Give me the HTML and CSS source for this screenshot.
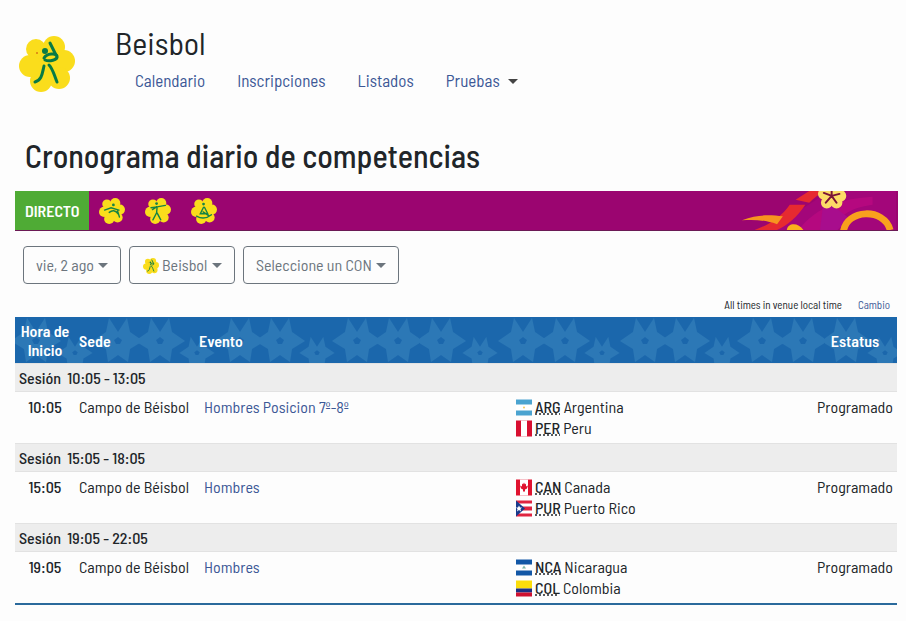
FILE: index.html
```
<!DOCTYPE html>
<html lang="es">
<head>
  <meta charset="UTF-8">
  <meta name="viewport" content="width=device-width, initial-scale=1.0">
  <title>Beisbol - Cronograma diario de competencias</title>
  <link rel="stylesheet" href="styles.css">
</head>
<body>
  <svg class="defs" width="0" height="0" aria-hidden="true">
    <defs>
      <symbol id="flower" viewBox="0 0 56 56">
        <g fill="#fadd1c">
          <circle cx="28" cy="28" r="19"/>
          <circle cx="17" cy="13" r="10"/>
          <circle cx="35" cy="11" r="11"/>
          <circle cx="45" cy="25" r="11"/>
          <circle cx="40" cy="42" r="11"/>
          <circle cx="22" cy="45" r="11"/>
          <circle cx="11" cy="30" r="11"/>
        </g>
      </symbol>
      <symbol id="baseball" viewBox="0 0 56 56">
        <use href="#flower"/>
        <g fill="none" stroke="#087a45" stroke-width="3" stroke-linecap="round" stroke-linejoin="round">
          <path d="M31 7l6 12"/>
          <path d="M25 22c3-5 12-5 13-2 1 4-8 6-12 4"/>
          <path d="M16 46c7-2 7-8 9-16M30 29c4 4 5 10 8 17"/>
        </g>
        <circle cx="26" cy="15" r="3" fill="#087a45"/>
        <circle cx="18" cy="17" r="1" fill="#d97a12"/>
      </symbol>
      <symbol id="batting" viewBox="0 0 56 56">
        <use href="#flower"/>
        <g fill="none" stroke="#168345" stroke-width="3" stroke-linecap="round">
          <path d="M12 26l14-5 17 5M22 31c6-5 13-6 20 4M40 28l4 13"/>
        </g>
        <circle cx="31" cy="15" r="3" fill="#168345"/>
      </symbol>
      <symbol id="archery" viewBox="0 0 56 56">
        <use href="#flower"/>
        <g fill="none" stroke="#168345" stroke-width="3" stroke-linecap="round">
          <path d="M13 21l13-2 18-3M26 20l-1 12-8 15M26 32l8 15M16 25l9-6"/>
        </g>
        <circle cx="25" cy="12" r="3" fill="#168345"/>
      </symbol>
      <symbol id="rowing" viewBox="0 0 56 56">
        <use href="#flower"/>
        <g fill="none" stroke="#168345" stroke-width="3" stroke-linecap="round">
          <path d="M27 20l-7 14h16l-7-14M12 39c10 6 22 5 32-3M26 30l12 8"/>
        </g>
        <circle cx="27" cy="13" r="3" fill="#168345"/>
      </symbol>
    </defs>
  </svg>

  <header class="header">
    <svg class="logo" role="img" aria-label="Beisbol"><use href="#baseball"/></svg>
    <div>
      <p class="sport">Beisbol</p>
      <nav class="nav">
        <a href="#">Calendario</a>
        <a href="#">Inscripciones</a>
        <a href="#">Listados</a>
        <a href="#" class="dropdown">Pruebas</a>
      </nav>
    </div>
  </header>

  <main>
    <h1>Cronograma diario de competencias</h1>

    <div class="live">
      <span class="live-label">DIRECTO</span>
      <a href="#" aria-label="Bate"><svg><use href="#batting"/></svg></a>
      <a href="#" aria-label="Tiro con arco"><svg><use href="#archery"/></svg></a>
      <a href="#" aria-label="Remo"><svg><use href="#rowing"/></svg></a>
      <svg class="live-art" viewBox="0 0 160 40" aria-hidden="true">
        <path d="M20 40C55 29 72 10 94 0h66v40z" fill="#a3067a"/>
        <path d="M60 40c20-25 45-32 76-34v8c-25 3-36 14-44 26z" fill="#b5087f"/>
        <path d="M86 8l26 20-12 12H82z" fill="#a80d8d"/>
        <path d="M15 40c14-5 27-13 36-26l16 0c-8 12-18 21-29 26z" fill="#e62a30"/>
        <path d="M57 9l14-9h18c-8 3-13 7-18 12z" fill="#e62a30"/>
        <path d="M2 30c18-7 31-5 42-4l-6 8c-12-4-22-5-36-4z" fill="#f7951f"/>
        <path d="M48 40c1-8 12-8 17 0z" fill="#fbb01c"/>
        <path d="M106 42c3-24 42-25 48-2" fill="none" stroke="#f9a11d" stroke-width="7"/>
        <g fill="#fcdc67">
          <circle cx="86" cy="3" r="6"/>
          <circle cx="94" cy="-1" r="7"/>
          <circle cx="103" cy="5" r="6"/>
          <circle cx="99" cy="12" r="6"/>
          <circle cx="89" cy="12" r="6"/>
          <circle cx="94" cy="6" r="7"/>
        </g>
        <path d="M94 5V-1M94 5l8-2M94 5l5 7M94 5l-6 7M94 5l-8-3" stroke="#7a1238" stroke-width="2" stroke-linecap="round"/>
      </svg>
    </div>

    <form class="filters">
      <label class="filter">
        <select aria-label="Fecha"><option>vie, 2 ago</option></select>
      </label>
      <label class="filter">
        <svg aria-hidden="true"><use href="#baseball"/></svg>
        <select aria-label="Deporte"><option>Beisbol</option></select>
      </label>
      <label class="filter">
        <select aria-label="CON"><option>Seleccione un CON</option></select>
      </label>
    </form>

    <div class="timezone">
      <span>All times in venue local time</span>
      <a href="#">Cambio</a>
    </div>

    <table class="schedule">
      <thead>
        <tr>
          <th class="time">Hora de Inicio</th>
          <th class="venue">Sede</th>
          <th class="event">Evento</th>
          <th class="teams"></th>
          <th class="status">Estatus</th>
        </tr>
      </thead>
      <tbody>
        <tr class="session"><th colspan="5">Sesión&nbsp; 10:05 - 13:05</th></tr>
        <tr>
          <td class="time">10:05</td>
          <td>Campo de Béisbol</td>
          <td class="event"><a href="#">Hombres Posicion 7º-8º</a></td>
          <td>
            <div class="team">
              <svg class="flag" viewBox="0 0 16 16"><path fill="#4aa3d0" d="M0 0h16v16H0z"/><path fill="#fff" d="M0 5h16v6H0z"/><circle cx="8" cy="8" r="1" fill="#f0c95a"/></svg>
              <abbr title="Argentina">ARG</abbr> Argentina
            </div>
            <div class="team">
              <svg class="flag" viewBox="0 0 16 16"><path fill="#d80f30" d="M0 0h16v16H0z"/><path fill="#fff" d="M5 0h6v16H5z"/></svg>
              <abbr title="Peru">PER</abbr> Peru
            </div>
          </td>
          <td class="status">Programado</td>
        </tr>

        <tr class="session"><th colspan="5">Sesión&nbsp; 15:05 - 18:05</th></tr>
        <tr>
          <td class="time">15:05</td>
          <td>Campo de Béisbol</td>
          <td class="event"><a href="#">Hombres</a></td>
          <td>
            <div class="team">
              <svg class="flag" viewBox="0 0 16 16"><path fill="#e0132f" d="M0 0h16v16H0z"/><path fill="#fff" d="M4 0h8v16H4z"/><path fill="#e0132f" d="M8 3l1 2 1-1v3l2-1-1 3-2 1v2H7v-2L5 9 4 6l2 1V4l1 1z"/></svg>
              <abbr title="Canada">CAN</abbr> Canada
            </div>
            <div class="team">
              <svg class="flag" viewBox="0 0 16 16"><path fill="#e02440" d="M0 0h16v16H0z"/><path fill="#fff" d="M0 3h16v3H0zM0 10h16v3H0z"/><path fill="#173a8c" d="M0 0l9 8-9 8z"/><path fill="#fff" d="M3 5l1 2h2L4.500 8.500 5 11 3 9.500 1 11l.5-2.500L0 7h2z"/></svg>
              <abbr title="Puerto Rico">PUR</abbr> Puerto Rico
            </div>
          </td>
          <td class="status">Programado</td>
        </tr>

        <tr class="session"><th colspan="5">Sesión&nbsp; 19:05 - 22:05</th></tr>
        <tr>
          <td class="time">19:05</td>
          <td>Campo de Béisbol</td>
          <td class="event"><a href="#">Hombres</a></td>
          <td>
            <div class="team">
              <svg class="flag" viewBox="0 0 16 16"><path fill="#1257a6" d="M0 0h16v16H0z"/><path fill="#fff" d="M0 5h16v6H0z"/><path fill="#7fb8a8" d="M8 6l2 3H6z"/></svg>
              <abbr title="Nicaragua">NCA</abbr> Nicaragua
            </div>
            <div class="team">
              <svg class="flag" viewBox="0 0 16 16"><path fill="#fbdd0b" d="M0 0h16v8H0z"/><path fill="#1c3084" d="M0 8h16v4H0z"/><path fill="#cf1030" d="M0 12h16v4H0z"/></svg>
              <abbr title="Colombia">COL</abbr> Colombia
            </div>
          </td>
          <td class="status">Programado</td>
        </tr>
      </tbody>
    </table>
  </main>
</body>
</html>
```
FILE: styles.css
```
* {
  box-sizing: border-box;
}
body {
  margin: 0;
  padding: 24px 8px 16px 15px;
  background-color: #fdfdfd;
  color: #212529;
  font-family: "Barlow Semi Condensed", "Roboto Condensed", Roboto, sans-serif;
  font-size: 16px;
  line-height: 24px;
}
a {
  color: #3c5896;
  text-decoration: none;
}
.defs {
  position: absolute;
}

/* header */
.header {
  display: flex;
  gap: 40px;
  padding-left: 4px;
}
.logo {
  width: 56px;
  height: 56px;
  margin-top: 12px;
}
.sport {
  margin: 0;
  font-size: 32px;
  line-height: 36px;
}
.nav {
  display: flex;
  gap: 32px;
  padding: 8px 20px 6px;
  font-size: 17px;
}
.dropdown::after,
.filter::after {
  content: "";
  display: inline-block;
  border: 5px solid transparent;
  border-top-color: #444;
  border-bottom: 0;
}
.dropdown::after {
  margin-left: 8px;
  vertical-align: 3px;
}
h1 {
  margin: 38px 10px 17px;
  font-size: 32px;
  font-weight: 500;
  line-height: 38px;
}

/* live bar */
.live {
  display: flex;
  align-items: center;
  height: 40px;
  background-color: #9b0570;
  border-bottom: 1px solid #6b1a55;
}
.live a,
.live a svg {
  display: block;
  width: 26px;
  height: 26px;
}
.live a {
  margin: 0 10px;
}
.live-label {
  align-self: stretch;
  padding: 0 10px;
  background-color: #4fab35;
  color: #fff;
  font-weight: 600;
  line-height: 39px;
}
.live-art {
  width: 160px;
  height: 39px;
  margin-left: auto;
}

/* filters */
.filters {
  display: flex;
  gap: 8px;
  padding: 15px 8px;
}
.filter {
  display: flex;
  align-items: center;
  height: 38px;
  padding: 0 12px;
  border: 1px solid #6c757d;
  border-radius: 4px;
  color: #6c757d;
}
.filter svg {
  width: 16px;
  height: 16px;
  margin: 2px 3px 0 1px;
}
.filter select {
  appearance: none;
  padding: 0;
  border: 0;
  background: none;
  color: inherit;
  font: inherit;
}
.filter::after {
  margin-left: 4px;
  border-top-color: #6c757d;
}
.timezone {
  display: flex;
  justify-content: flex-end;
  gap: 16px;
  padding: 0 8px 6px;
  font-size: 11px;
  line-height: 12px;
}

/* schedule */
.schedule {
  width: calc(100% - 1px);
  border-collapse: collapse;
  table-layout: fixed;
  border-bottom: 2px solid #2a6a9c;
  line-height: 21px;
}
.schedule thead {
  background: #1b67ac url("data:image/svg+xml,%3Csvg xmlns='http://www.w3.org/2000/svg' width='405' height='46'%3E%3Cdefs%3E%3Cpath id='s' fill-rule='evenodd' d='M0-9L9-23 12-9 25 0 12 8 10 21 0 14-10 21-12 8-25 0-12-9-9-23zM0-4L-4-1-2 3H2L4-1z'/%3E%3C/defs%3E%3Cg fill='%232c78b6'%3E%3Cuse href='%23s' x='21' y='24'/%3E%3Cuse href='%23s' x='103' y='24'/%3E%3Cuse href='%23s' x='145' y='24'/%3E%3Cuse href='%23s' x='225' y='24'/%3E%3Cuse href='%23s' x='265' y='24'/%3E%3Cuse href='%23s' x='342' y='24'/%3E%3Cuse href='%23s' x='383' y='24'/%3E%3Cuse href='%23s' transform='translate(60 36) scale(.7)'/%3E%3Cuse href='%23s' transform='translate(182 36) scale(.7)'/%3E%3Cuse href='%23s' transform='translate(302 36) scale(.7)'/%3E%3C/g%3E%3C/svg%3E");
  color: #fff;
}
.schedule th {
  padding: 4px;
  font-weight: 600;
  line-height: 19px;
  text-align: left;
}
.schedule td {
  padding: 4px 4px 5px;
  vertical-align: top;
}
.schedule .session th {
  height: 28px;
  background-color: #ededed;
  border-top: 1px solid #e2e2e2;
  border-bottom: 1px solid #e2e2e2;
}
.schedule .time {
  width: 60px;
  font-weight: 600;
  text-align: center;
}
.schedule .session th,
.schedule td.time {
  font-weight: 500;
}
.schedule .venue {
  width: 120px;
}
.schedule td.event {
  padding-left: 9px;
}
.schedule .teams {
  width: 301px;
}
.schedule .status {
  width: 84px;
  text-align: center;
}
.team {
  display: flex;
  gap: 3px;
}
.flag {
  width: 16px;
  height: 17px;
  margin-top: 3px;
}
.team abbr {
  font-weight: 500;
  text-decoration: underline dotted;
}
```
